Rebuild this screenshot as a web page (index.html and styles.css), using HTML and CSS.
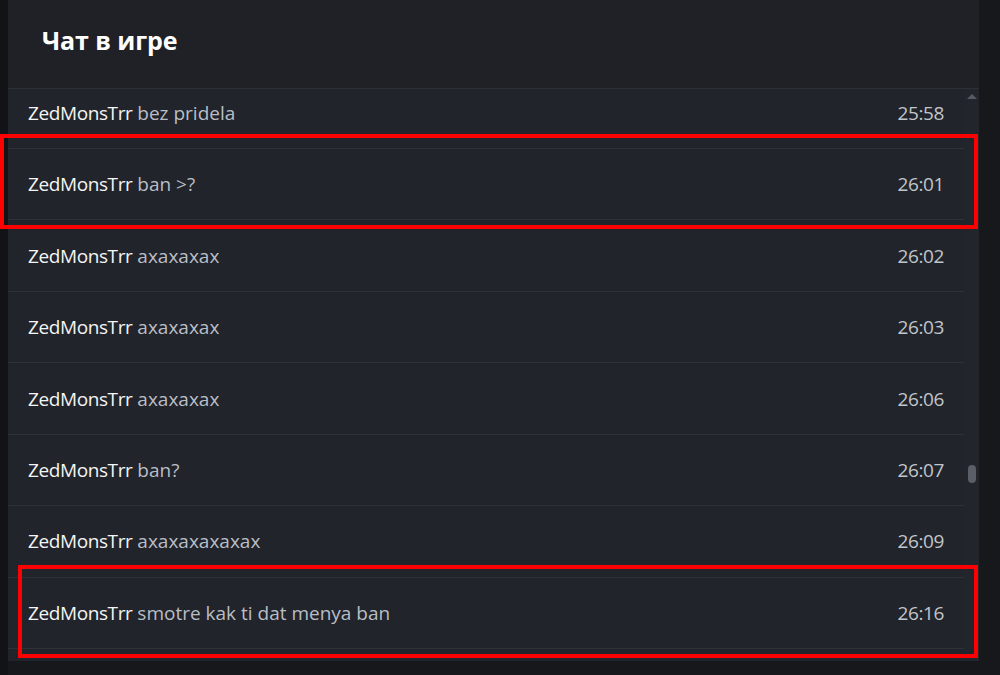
FILE: index.html
```html
<!DOCTYPE html>
<html lang="ru">
<head>
<meta charset="utf-8">
<title>Чат в игре</title>
<link rel="stylesheet" href="styles.css">
</head>
<body>
<div class="page">
  <div class="strip"></div>
  <section class="panel">
    <header class="panel-head">
      <h1 class="title">Чат в игре</h1>
    </header>
    <div class="body">
      <div class="viewport">
        <ul class="rows">
          <li class="row"><span class="msg"><b class="user">ZedMonsTrr</b> bez pridela</span><span class="time">25:58</span></li>
          <li class="row"><span class="msg"><b class="user">ZedMonsTrr</b> ban &gt;?</span><span class="time">26:01</span></li>
          <li class="row"><span class="msg"><b class="user">ZedMonsTrr</b> axaxaxax</span><span class="time">26:02</span></li>
          <li class="row"><span class="msg"><b class="user">ZedMonsTrr</b> axaxaxax</span><span class="time">26:03</span></li>
          <li class="row"><span class="msg"><b class="user">ZedMonsTrr</b> axaxaxax</span><span class="time">26:06</span></li>
          <li class="row"><span class="msg"><b class="user">ZedMonsTrr</b> ban?</span><span class="time">26:07</span></li>
          <li class="row"><span class="msg"><b class="user">ZedMonsTrr</b> axaxaxaxaxax</span><span class="time">26:09</span></li>
          <li class="row"><span class="msg"><b class="user">ZedMonsTrr</b> smotre kak ti dat menya ban</span><span class="time">26:16</span></li>
        </ul>
      </div>
      <div class="scrollbar">
        <svg class="arrow" width="14" height="10" viewBox="0 0 14 10"><polygon points="2,8 7,3 12,8" fill="#565b63"/></svg>
        <div class="thumb"></div>
      </div>
    </div>
  </section>
</div>
<div class="mark mark-1"></div>
<div class="mark mark-2"></div>
</body>
</html>
```
FILE: styles.css
```css
* { box-sizing: border-box; }
html, body { margin: 0; padding: 0; }
body {
  width: 1000px;
  height: 675px;
  overflow: hidden;
  background: #17181c;
  font-family: "Open Sans", "Noto Sans", sans-serif;
  position: relative;
}
.page {
  display: flex;
  height: 675px;
}
.strip {
  width: 8px;
  background: #121317;
}
.panel {
  width: 971px;
  height: 661px;
  background: #21242a;
  display: flex;
  flex-direction: column;
}
.panel-head {
  height: 89px;
  flex: none;
  background: #1f2127;
  border-bottom: 1px solid #2d3037;
  display: flex;
  align-items: center;
  padding-left: 34px;
  padding-bottom: 8px;
}
.title {
  margin: 0;
  color: #ffffff;
  font-size: 25px;
  font-weight: 700;
  letter-spacing: -0.1px;
}
.body {
  flex: 1;
  display: flex;
  overflow: hidden;
}
.viewport {
  width: 956px;
  overflow: hidden;
}
.rows {
  list-style: none;
  margin: -11.4px 0 0 0;
  padding: 0;
}
.row {
  height: 71.43px;
  border-bottom: 1px solid #2e3138;
  display: flex;
  align-items: center;
  justify-content: space-between;
  padding: 0 20px 0 20px;
  font-size: 19px;
}
.msg { color: #b9bec6; }
.user { font-weight: 400; color: #f4f4f4; letter-spacing: -0.4px; }
.time { color: #c1c5cc; letter-spacing: -0.4px; }
.scrollbar {
  width: 15px;
  display: flex;
  flex-direction: column;
  align-items: center;
  background: #22252b;
}
.arrow { margin-top: 2px; }
.thumb {
  width: 8px;
  height: 18px;
  border-radius: 4px;
  background: #5a5f67;
  margin-top: 364px;
}
.mark {
  position: absolute;
  border: 4px solid #ff0000;
  pointer-events: none;
}
.mark-1 { left: 0; top: 134px; width: 978px; height: 95px; }
.mark-2 { left: 18px; top: 565px; width: 960px; height: 93px; }
```
